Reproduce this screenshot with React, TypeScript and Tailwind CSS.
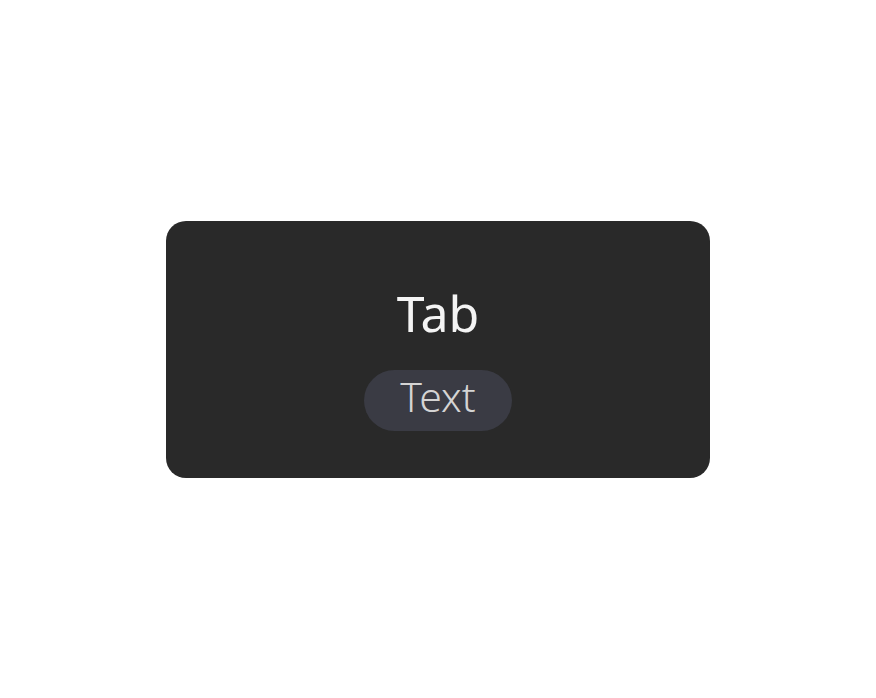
export default function App() {
  return (
    <div className="flex h-[698px] w-full items-center justify-center bg-white" style={{ fontFamily: '"Noto Sans", "Open Sans", sans-serif' }}>
      <div className="flex h-[257px] w-[544px] flex-col items-center rounded-[20px] bg-[#292929] pt-[67px]">
        <div className="text-[50px] font-normal leading-none text-[#f4f4f4]">Tab</div>
        <div className="mt-[32px] flex h-[61px] w-[148px] items-center justify-center rounded-full bg-[#3a3b44] pb-2 text-[41px] font-light leading-none text-[#d4d4d4]">
          Text
        </div>
      </div>
    </div>
  );
}
